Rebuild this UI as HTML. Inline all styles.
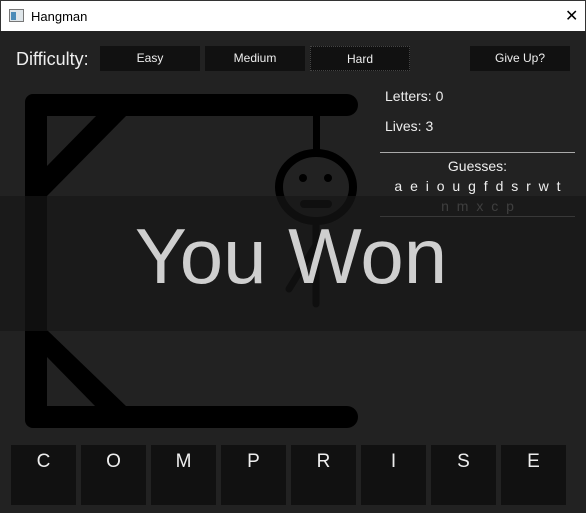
<!DOCTYPE html>
<html><head><style>
*{margin:0;padding:0;box-sizing:border-box}
body{width:586px;height:513px;background:#222;position:relative;overflow:hidden;font-family:"Liberation Sans",sans-serif;color:#fff}
.title{position:absolute;left:0;top:0;width:586px;height:31px;background:#fff;border:1px solid #333;border-bottom:none}
.title span{position:absolute;left:30px;top:8px;font-size:13px;color:#000}
.btn{position:absolute;top:46px;height:25px;width:100px;background:#111;color:#eee;font-size:12px;text-align:center;line-height:25px}
.tile{position:absolute;top:445px;width:65px;height:60px;background:#111;color:#eee;font-size:19px;text-align:center;padding-top:6px}
.t{position:absolute;font-size:14px;color:#eee}
</style></head><body>
<div class="title"><svg style="position:absolute;left:8px;top:8px" width="15" height="13"><rect x="0.5" y="0.5" width="14" height="12" fill="#dfe6ea" stroke="#777"/><rect x="2" y="3" width="5" height="8" fill="#4a8bb8"/></svg><span>Hangman</span><span style="left:564px;top:5px;font-size:16px;font-weight:300">✕</span></div>
<div style="position:absolute;left:16px;top:49px;font-size:18px;color:#eee">Difficulty:</div>
<div class="btn" style="left:100px">Easy</div>
<div class="btn" style="left:205px">Medium</div>
<div class="btn" style="left:310px;border:1px dotted #444">Hard</div>
<div class="btn" style="left:470px">Give Up?</div>
<svg style="position:absolute;left:0;top:0" width="586" height="513">
<rect x="25" y="94" width="333" height="22" rx="11" fill="#000"/>
<rect x="25" y="406" width="333" height="22" rx="11" fill="#000"/>
<rect x="25" y="94" width="22" height="334" rx="8" fill="#000"/>
<polygon points="97,115 127,115 47,196 47,166" fill="#000"/>
<polygon points="47,330 127,407 96,407 47,357" fill="#000"/>
<rect x="313" y="112" width="7" height="40" fill="#000"/>
<ellipse cx="316" cy="187" rx="37" ry="34" fill="none" stroke="#000" stroke-width="8"/>
<circle cx="303" cy="178" r="4" fill="#000"/><circle cx="328" cy="178" r="4" fill="#000"/>
<line x1="304" y1="204" x2="328" y2="204" stroke="#000" stroke-width="8" stroke-linecap="round"/>
<line x1="316" y1="225" x2="316" y2="304" stroke="#000" stroke-width="7" stroke-linecap="round"/>
<line x1="316" y1="245" x2="289" y2="289" stroke="#000" stroke-width="7" stroke-linecap="round"/>
<line x1="380" y1="152.5" x2="575" y2="152.5" stroke="#aaa"/>
<line x1="380" y1="216.5" x2="575" y2="216.5" stroke="#777"/>
</svg>
<div class="t" style="left:385px;top:88px">Letters: 0</div>
<div class="t" style="left:385px;top:118px">Lives: 3</div>
<div class="t" style="left:380px;top:158px;width:195px;text-align:center">Guesses:</div>
<div class="t" style="left:380px;top:178px;width:195px;text-align:center;word-spacing:4px;font-size:14px">a e i o u g f d s r w t</div>
<div class="t" style="left:380px;top:198px;width:195px;text-align:center;word-spacing:4px;color:#888">n m x c p</div>
<div style="position:absolute;left:0;top:196px;width:586px;height:135px;background:rgba(23,23,23,0.65)"></div>
<div style="position:absolute;left:-2px;top:211px;width:586px;text-align:center;font-size:78px;color:#cfcfcf;line-height:90px">You Won</div>
<div class="tile" style="left:11px">C</div>
<div class="tile" style="left:81px">O</div>
<div class="tile" style="left:151px">M</div>
<div class="tile" style="left:221px">P</div>
<div class="tile" style="left:291px">R</div>
<div class="tile" style="left:361px">I</div>
<div class="tile" style="left:431px">S</div>
<div class="tile" style="left:501px">E</div>
</body></html>
